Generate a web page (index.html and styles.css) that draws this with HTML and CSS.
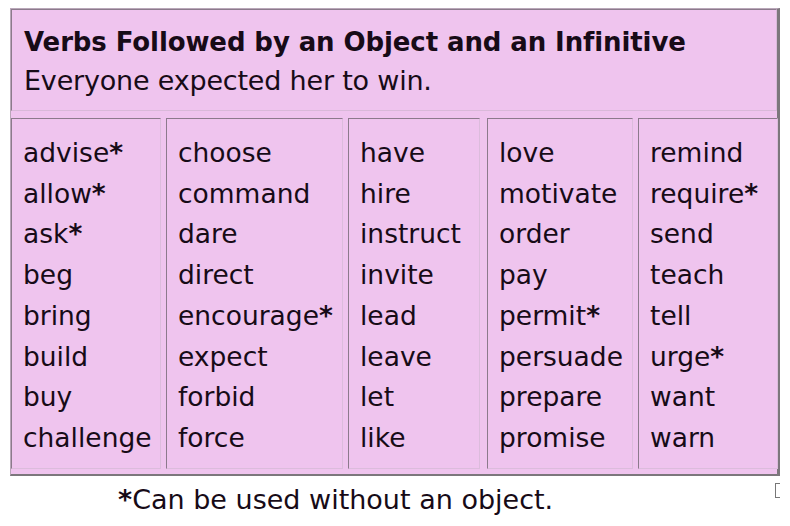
FILE: index.html
```html
<!DOCTYPE html>
<html lang="en">
<head>
<meta charset="utf-8">
<title>Verbs Followed by an Object and an Infinitive</title>
<link rel="stylesheet" href="styles.css">
</head>
<body>
<div class="chart">
  <div class="head">
    <div class="title">Verbs Followed by an Object and an Infinitive</div>
    <div class="example">Everyone expected her to win.</div>
  </div>
  <div class="cols">
    <ul class="col c1">
      <li>advise<span class="star">*</span></li>
      <li>allow<span class="star">*</span></li>
      <li>ask<span class="star">*</span></li>
      <li>beg</li>
      <li>bring</li>
      <li>build</li>
      <li>buy</li>
      <li>challenge</li>
    </ul>
    <ul class="col c2">
      <li>choose</li>
      <li>command</li>
      <li>dare</li>
      <li>direct</li>
      <li>encourage<span class="star">*</span></li>
      <li>expect</li>
      <li>forbid</li>
      <li>force</li>
    </ul>
    <ul class="col c3">
      <li>have</li>
      <li>hire</li>
      <li>instruct</li>
      <li>invite</li>
      <li>lead</li>
      <li>leave</li>
      <li>let</li>
      <li>like</li>
    </ul>
    <ul class="col c4">
      <li>love</li>
      <li>motivate</li>
      <li>order</li>
      <li>pay</li>
      <li>permit<span class="star">*</span></li>
      <li>persuade</li>
      <li>prepare</li>
      <li>promise</li>
    </ul>
    <ul class="col c5">
      <li>remind</li>
      <li>require<span class="star">*</span></li>
      <li>send</li>
      <li>teach</li>
      <li>tell</li>
      <li>urge<span class="star">*</span></li>
      <li>want</li>
      <li>warn</li>
    </ul>
  </div>
</div>
<div class="foot">
  <p class="note"><span class="star">*</span>Can be used without an object.</p>
  <span class="mark"></span>
</div>
</body>
</html>
```

FILE: styles.css
```css
html, body {
  margin: 0;
  padding: 0;
  background: #ffffff;
}

body {
  font-family: "DejaVu Sans", "Liberation Sans", sans-serif;
  color: #170b17;
  width: 790px;
  height: 526px;
  overflow: hidden;
}

.chart {
  margin: 8px 0 0 10px;
  width: 766px;
  background: #efc4ee;
  border-top: 1px solid #b9a7b9;
  border-left: 1px solid #b9a7b9;
  border-right: 3px solid #7c777c;
  border-bottom: 2px solid #7c777c;
  padding: 0 0 5px 0;
  display: flex;
  flex-direction: column;
  gap: 7px;
}

.head {
  border-top: 1px solid #8c7a8c;
  border-left: 1px solid #8c7a8c;
  border-right: 1px solid #d9b9d9;
  border-bottom: 1px solid #d9b9d9;
  height: 102px;
  padding: 0 0 0 12px;
  box-sizing: border-box;
}

.title {
  font-weight: bold;
  font-size: 26px;
  line-height: 34px;
  margin-top: 15px;
  letter-spacing: -0.1px;
}

.example {
  font-size: 27px;
  line-height: 36px;
  margin-top: 4px;
  letter-spacing: -0.2px;
}

.cols {
  display: grid;
  grid-template-columns: 150px 177px 132px 148px 140px;
  column-gap: 5px;
}

.col {
  list-style: none;
  margin: 0;
  padding: 14px 0 9px 11px;
  border-top: 1px solid #8c7a8c;
  border-left: 1px solid #8c7a8c;
  border-right: 1px solid #dcbcdc;
  border-bottom: 1px solid #dcbcdc;
  font-size: 26.5px;
  line-height: 40.7px;
  white-space: nowrap;
}

.cols .c4 {
  margin-left: 2px;
  width: 146px;
  box-sizing: border-box;
}

.star {
  font-weight: bold;
}

.foot {
  display: flex;
  justify-content: space-between;
  align-items: flex-start;
  width: 780px;
}

.note {
  margin: 7px 0 0 118px;
  font-size: 27px;
  line-height: 34px;
}

.mark {
  width: 4px;
  height: 13px;
  border: 1px solid #777;
  border-right: none;
  margin-top: 7px;
}
```
